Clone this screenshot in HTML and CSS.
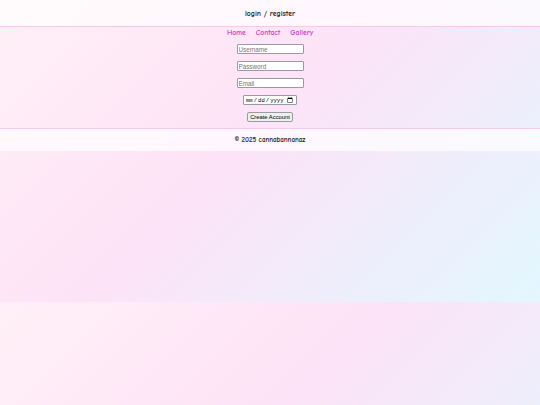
FILE: index.html
```html
<!DOCTYPE html>
<html lang="en">
<head>
<meta charset="utf-8">
<title>login / register</title>
<link rel="stylesheet" href="styles.css">
</head>
<body>
<header class="site-header">
  <h1 class="title">login / register</h1>
</header>
<nav class="nav">
  <a href="#" class="nav-link">Home</a>
  <a href="#" class="nav-link">Contact</a>
  <a href="#" class="nav-link">Gallery</a>
</nav>
<main class="main">
  <form class="form">
    <input class="field" type="text" placeholder="Username">
    <input class="field" type="password" placeholder="Password">
    <input class="field" type="email" placeholder="Email">
    <input class="field date" type="date">
    <button class="btn" type="button">Create Account</button>
  </form>
</main>
<footer class="site-footer">
  <p class="copy">© 2025 cannabannanaz</p>
</footer>
</body>
</html>
```
FILE: styles.css
```css
html {
  background: linear-gradient(135deg, #fff0f6 0%, #fde3f7 45%, #e2f7ff 100%);
  background-size: 100% 302px;
  background-repeat: repeat;
}
body {
  margin: 0;
  font-family: "Comic Sans MS", "Comic Neue", cursive;
  color: #1a1a1a;
}
.site-header {
  background: rgba(255, 255, 255, 0.7);
  border-bottom: 1px solid #f6c8ea;
  height: 26px;
  display: flex;
  align-items: center;
  justify-content: center;
}
.title {
  margin: 0;
  font-size: 7.7px;
  font-weight: bold;
}
.nav {
  display: flex;
  justify-content: center;
  gap: 10px;
  padding: 0;
  height: 11px;
  align-items: center;
}
.nav-link {
  color: #cf42bd;
  text-decoration: none;
  font-size: 7.5px;
  font-weight: bold;
}
.main {
  padding: 6px 0 6px;
}
.form {
  display: flex;
  flex-direction: column;
  align-items: center;
  gap: 7px;
}
.field {
  width: 67px;
  height: 10px;
  box-sizing: border-box;
  font-family: "Liberation Sans", Arial, sans-serif;
  font-size: 6.3px;
  padding: 0 1px;
  border: 1px solid #9a9aa6;
  border-radius: 1px;
  background: #fff;
}
.date {
  width: 54px;
  font-family: "Liberation Mono", monospace;
  font-size: 5.6px;
}
.btn {
  font-family: "Liberation Sans", Arial, sans-serif;
  font-size: 5.8px;
  height: 10px;
  padding: 0 2px;
  border: 1px solid #9a9aa6;
  border-radius: 2px;
  background: #efefef;
  color: #000;
}
.site-footer {
  background: rgba(255, 255, 255, 0.7);
  border-top: 1px solid #f6c8ea;
  height: 22px;
  display: flex;
  align-items: center;
  justify-content: center;
}
.copy {
  margin: 0;
  font-size: 7px;
  font-weight: bold;
}
```
